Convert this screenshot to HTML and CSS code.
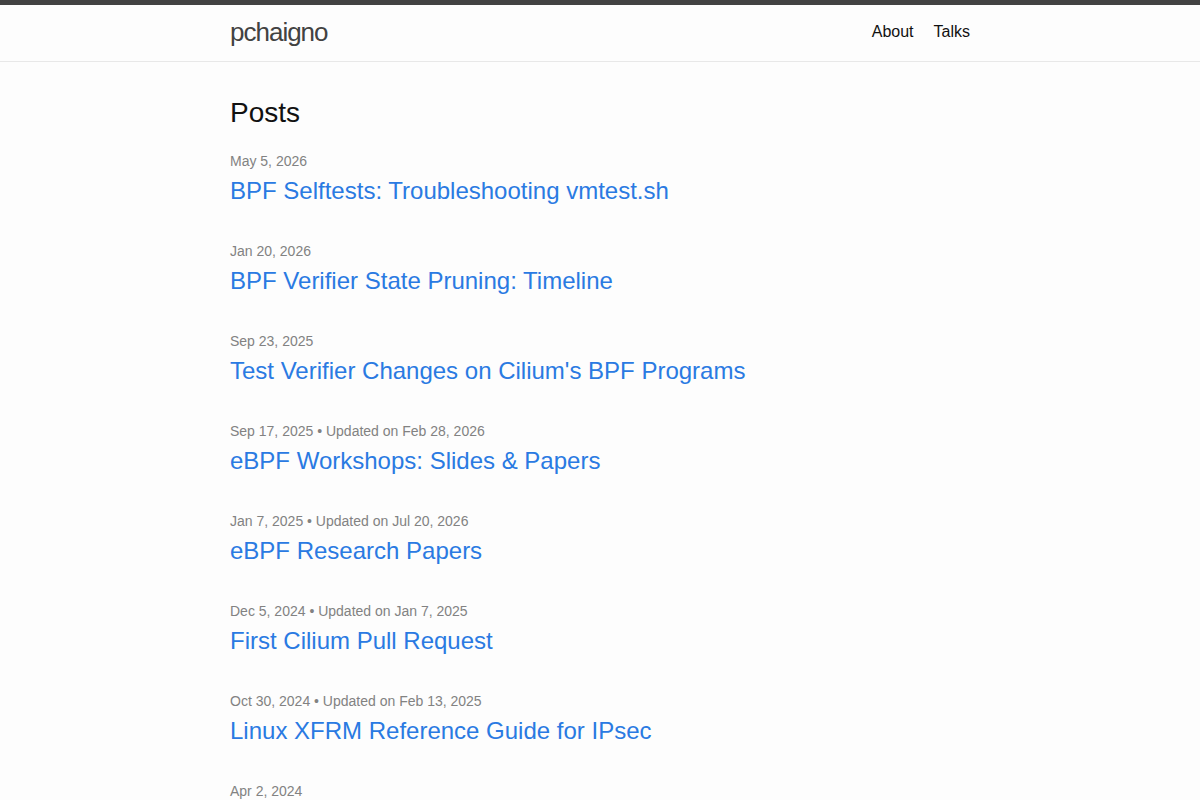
FILE: index.html
```html
<!DOCTYPE html>
<html lang="en">
<head>
<meta charset="utf-8">
<title>pchaigno</title>
<link rel="stylesheet" href="styles.css">
</head>
<body>
<header class="site-header">
  <div class="wrapper header-inner">
    <a class="site-title" href="#">pchaigno</a>
    <nav class="site-nav">
      <a class="page-link" href="#">About</a>
      <a class="page-link" href="#">Talks</a>
    </nav>
  </div>
</header>
<main class="page-content">
  <div class="wrapper">
    <h2 class="post-list-heading">Posts</h2>
    <ul class="post-list">
      <li><span class="post-meta">May 5, 2026</span><h3><a class="post-link" href="#">BPF Selftests: Troubleshooting vmtest.sh</a></h3></li>
      <li><span class="post-meta">Jan 20, 2026</span><h3><a class="post-link" href="#">BPF Verifier State Pruning: Timeline</a></h3></li>
      <li><span class="post-meta">Sep 23, 2025</span><h3><a class="post-link" href="#">Test Verifier Changes on Cilium's BPF Programs</a></h3></li>
      <li><span class="post-meta">Sep 17, 2025 • Updated on Feb 28, 2026</span><h3><a class="post-link" href="#">eBPF Workshops: Slides &amp; Papers</a></h3></li>
      <li><span class="post-meta">Jan 7, 2025 • Updated on Jul 20, 2026</span><h3><a class="post-link" href="#">eBPF Research Papers</a></h3></li>
      <li><span class="post-meta">Dec 5, 2024 • Updated on Jan 7, 2025</span><h3><a class="post-link" href="#">First Cilium Pull Request</a></h3></li>
      <li><span class="post-meta">Oct 30, 2024 • Updated on Feb 13, 2025</span><h3><a class="post-link" href="#">Linux XFRM Reference Guide for IPsec</a></h3></li>
      <li><span class="post-meta">Apr 2, 2024</span></li>
    </ul>
  </div>
</main>
</body>
</html>
```
FILE: styles.css
```css
* { box-sizing: border-box; }
html, body { margin: 0; padding: 0; }
body {
  font-family: "Liberation Sans", Arial, Helvetica, sans-serif;
  font-size: 16px;
  line-height: 1.5;
  color: #111111;
  background: #fdfdfd;
}
a { text-decoration: none; }
.wrapper {
  max-width: 800px;
  margin: 0 auto;
  padding: 0 30px;
}
.site-header {
  border-top: 5px solid #424242;
  border-bottom: 1px solid #e8e8e8;
}
.header-inner {
  display: flex;
  justify-content: space-between;
  align-items: flex-start;
  min-height: 56px;
}
.site-title {
  font-size: 26px;
  font-weight: 300;
  line-height: 54px;
  letter-spacing: -1px;
  color: #424242;
}
.site-nav {
  display: flex;
  gap: 20px;
  line-height: 54px;
}
.page-link { color: #111111; }
.page-content { padding: 30px 0; }
.post-list-heading {
  font-size: 28px;
  font-weight: 400;
  line-height: 42px;
  margin: 0 0 17px;
}
.post-list {
  list-style: none;
  margin: 0;
  padding: 0;
}
.post-list li { margin-bottom: 32px; }
.post-meta {
  display: block;
  font-size: 14px;
  line-height: 21px;
  color: #828282;
}
.post-list h3 {
  margin: 1px 0 0;
  font-size: 24px;
  font-weight: 400;
  line-height: 36px;
}
.post-link { color: #2a7ae2; }
```
